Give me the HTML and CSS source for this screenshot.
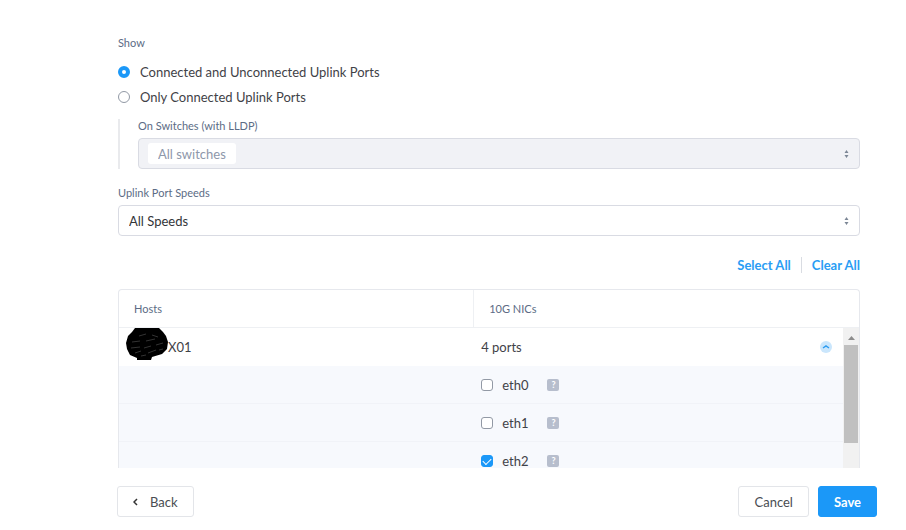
FILE: index.html
```html
<!DOCTYPE html>
<html lang="en">

<head>
    <meta charset="UTF-8">
    <meta name="viewport" content="width=device-width, initial-scale=1.0">
    <title>Uplink Ports</title>
    <link rel="stylesheet" href="styles.css">
</head>

<body>

    <main class="content">
        <fieldset class="show">
            <legend class="caption">Show</legend>
            <div class="option">
                <input type="radio" name="show" id="all_ports" checked>
                <label for="all_ports">Connected and Unconnected Uplink Ports</label>
            </div>
            <div class="option">
                <input type="radio" name="show" id="connected_ports">
                <label for="connected_ports">Only Connected Uplink Ports</label>
            </div>
        </fieldset>

        <div class="field nested">
            <label class="caption" for="switches">On Switches (with LLDP)</label>
            <div class="select-box disabled">
                <select class="chip" id="switches" disabled>
                    <option>All switches</option>
                </select>
                <svg class="arrows" width="5" height="8" viewBox="0 0 5 8"><path d="M2.5 0 4.5 3h-4zM2.5 8l-2-3h4z" fill="#7c8796"/></svg>
            </div>
        </div>

        <div class="field">
            <label class="caption" for="speeds">Uplink Port Speeds</label>
            <div class="select-box">
                <select id="speeds">
                    <option>All Speeds</option>
                </select>
                <svg class="arrows" width="5" height="8" viewBox="0 0 5 8"><path d="M2.5 0 4.5 3h-4zM2.5 8l-2-3h4z" fill="#7c8796"/></svg>
            </div>
        </div>

        <div class="links">
            <a href="#">Select All</a>
            <a href="#">Clear All</a>
        </div>

        <div class="hosts">
            <table>
                <thead>
                    <tr>
                        <th>Hosts</th>
                        <th>10G NICs</th>
                    </tr>
                </thead>
                <tbody>
                    <tr>
                        <td>
                            <div class="host">
                                <svg width="42" height="33" viewBox="0 0 42 33">
                                    <path d="M9 0h24l4 4 3 4 2 6-1 7-5 5-10 3-1 3H11v-2l-7-3-3-6-1-6 2-7 4-4z" fill="#000"/>
                                    <path d="M13 8l7-2M26 7l6 2M6 14l8-1M20 13l9-2M30 17l7-2M5 20l9-1M18 20l7-2M9 25l6-2M22 25l8-3M33 22l4-1M15 28l5-1" stroke="#333" fill="none"/>
                                </svg>
                                <span>X01</span>
                            </div>
                        </td>
                        <td>
                            <div class="summary">
                                <span>4 ports</span>
                                <button class="collapse" aria-label="Collapse">
                                    <svg width="8" height="6" viewBox="0 0 8 6"><path d="M1 4 4 2l3 2" stroke="#2d9cf0" stroke-width="1.5" fill="none"/></svg>
                                </button>
                            </div>
                        </td>
                    </tr>
                    <tr class="port">
                        <td></td>
                        <td>
                            <div class="nic">
                                <input type="checkbox" id="eth0">
                                <label for="eth0">eth0</label>
                                <span class="help">?</span>
                            </div>
                        </td>
                    </tr>
                    <tr class="port">
                        <td></td>
                        <td>
                            <div class="nic">
                                <input type="checkbox" id="eth1">
                                <label for="eth1">eth1</label>
                                <span class="help">?</span>
                            </div>
                        </td>
                    </tr>
                    <tr class="port">
                        <td></td>
                        <td>
                            <div class="nic">
                                <input type="checkbox" id="eth2" checked>
                                <label for="eth2">eth2</label>
                                <span class="help">?</span>
                            </div>
                        </td>
                    </tr>
                </tbody>
            </table>
            <div class="scrollbar">
                <svg width="7" height="4" viewBox="0 0 7 4"><path d="M0 4 3.5 0 7 4z" fill="#8c8c8c"/></svg>
                <div class="thumb"></div>
            </div>
        </div>
    </main>

    <footer class="actions">
        <button class="back">
            <svg width="5" height="8" viewBox="0 0 5 8"><path d="M4 1 1 4l3 3" stroke="#333" stroke-width="1.5" fill="none"/></svg>
            Back
        </button>
        <button>Cancel</button>
        <button class="save">Save</button>
    </footer>

</body>

</html>
```

FILE: styles.css
```css
* {
    box-sizing: border-box;
}

body {
    display: flex;
    flex-direction: column;
    height: 100vh;
    margin: 0;
    font-family: Lato, "Liberation Sans", sans-serif;
    font-size: 13px;
    line-height: 20px;
    color: #3f4247;
    background-color: white;
}

.content {
    display: flex;
    flex-direction: column;
    flex: 1;
    min-height: 0;
    overflow: hidden;
    padding: 36px 46px 0 118px;
}

.caption {
    display: block;
    padding: 0;
    font-size: 11px;
    line-height: 14px;
    color: #5c6c85;
}

.show {
    margin: 0;
    padding: 0;
    border: none;
}

.option {
    display: flex;
    align-items: center;
    gap: 10px;
    margin-top: 5px;
}

.option:first-of-type {
    margin-top: 12px;
}

input {
    appearance: none;
    flex: none;
    width: 12px;
    height: 12px;
    margin: 0;
    border: 1px solid #9299a5;
    background-color: white;
}

input[type="radio"] {
    border-radius: 50%;
}

input[type="radio"]:checked {
    border: 4px solid #1b98f8;
}

input[type="checkbox"] {
    border-radius: 3px;
}

input[type="checkbox"]:checked {
    border-color: #1b98f8;
    background-color: #1b98f8;
}

input[type="checkbox"]:checked::before {
    content: "";
    display: block;
    width: 7px;
    height: 4px;
    margin: 2px 1px;
    border-left: 1px solid white;
    border-bottom: 1px solid white;
    transform: rotate(-45deg);
}

.field {
    margin-top: 17px;
}

.field.nested {
    margin-top: 12px;
    padding-left: 18px;
    border-left: 2px solid #e9eaed;
}

.select-box {
    display: flex;
    align-items: center;
    position: relative;
    height: 31px;
    margin-top: 5px;
    border: 1px solid #d9dbe3;
    border-radius: 4px;
}

.select-box.disabled {
    padding-left: 9px;
    background-color: #f1f2f6;
}

select {
    appearance: none;
    width: 100%;
    height: 29px;
    padding: 0 10px;
    border: none;
    background-color: transparent;
    font: inherit;
    color: #333539;
}

select.chip {
    width: auto;
    height: 21px;
    border-radius: 3px;
    background-color: white;
    color: #8e97aa;
    opacity: 1;
}

.arrows {
    position: absolute;
    right: 10px;
}

.links {
    display: flex;
    justify-content: flex-end;
    align-items: center;
    height: 20px;
    margin-top: 19px;
}

.links a {
    color: #2a9df4;
    font-weight: 700;
    line-height: 16px;
    text-decoration: none;
}

.links a + a {
    margin-left: 10px;
    padding-left: 10px;
    border-left: 1px solid #d9dce2;
}

.hosts {
    position: relative;
    flex: 1;
    min-height: 0;
    margin-top: 14px;
    border: 1px solid #e6e8ed;
    border-bottom: none;
    border-radius: 4px 4px 0 0;
    overflow: hidden;
}

table {
    width: 100%;
    border-collapse: separate;
    border-spacing: 0;
    table-layout: fixed;
}

th {
    height: 38px;
    padding: 0 15px;
    border-bottom: 1px solid #eef0f3;
    font-size: 11px;
    font-weight: 400;
    text-align: left;
    color: #5c6c85;
}

th:first-child {
    width: 48%;
    border-right: 1px solid #eef0f3;
}

td {
    height: 38px;
    padding: 0 7px;
}

.port td {
    border-bottom: 1px solid #f1f3f8;
    background-color: #f7f9fd;
}

.host,
.summary,
.nic {
    display: flex;
    align-items: center;
}

.host svg {
    margin-bottom: 5px;
}

.summary {
    justify-content: space-between;
    padding-right: 20px;
}

.collapse {
    display: flex;
    align-items: center;
    justify-content: center;
    width: 12px;
    height: 12px;
    padding: 0;
    border: none;
    border-radius: 50%;
    background-color: #cae6fc;
}

.nic label {
    margin-left: 9px;
}

.help {
    width: 12px;
    height: 12px;
    margin-left: 19px;
    border-radius: 2px;
    background-color: #b7becd;
    font-size: 9px;
    font-weight: 700;
    line-height: 12px;
    text-align: center;
    color: white;
}

.scrollbar {
    display: flex;
    flex-direction: column;
    align-items: center;
    position: absolute;
    top: 38px;
    right: 0;
    bottom: 0;
    width: 16px;
    padding: 8px 1px 0;
    background-color: #f1f1f1;
}

.thumb {
    width: 100%;
    height: 98px;
    margin-top: 5px;
    background-color: #c0c0c0;
}

.actions {
    display: flex;
    gap: 9px;
    padding: 18px 29px 13px 117px;
}

.actions button {
    height: 31px;
    padding: 0 15px;
    border: 1px solid #e3e5e9;
    border-radius: 3px;
    background-color: white;
    font: inherit;
    color: #4a4d52;
}

.actions .back {
    display: flex;
    align-items: center;
    gap: 12px;
    margin-right: auto;
}

.actions .save {
    border-color: #1b98f8;
    background-color: #1b98f8;
    font-weight: 700;
    color: white;
}
```
